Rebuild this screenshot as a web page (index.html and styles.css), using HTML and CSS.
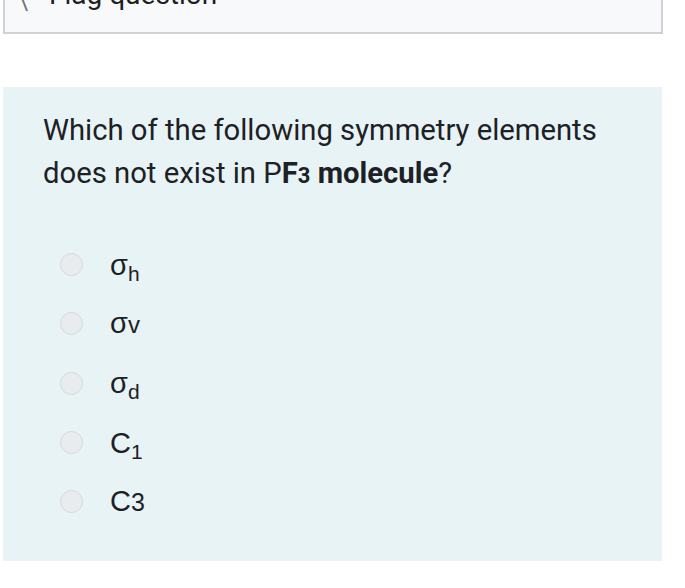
FILE: index.html
```html
<!DOCTYPE html>
<html>
<head>
<meta charset="utf-8">
<link rel="stylesheet" href="styles.css">
</head>
<body>
<div class="page">
  <div class="flagbox">
    <span class="flagicon">\</span>
    <span class="flagtext">Flag question</span>
  </div>
  <div class="qbox">
    <div class="qtext">Which of the following symmetry elements does not exist in P<b>F<span class="small3">3</span> molecule</b>?</div>
    <div class="answers">
      <label class="opt"><span class="radio"></span><span class="lbl">σ<sub>h</sub></span></label>
      <label class="opt"><span class="radio"></span><span class="lbl">σ<span class="inl">v</span></span></label>
      <label class="opt"><span class="radio"></span><span class="lbl">σ<sub>d</sub></span></label>
      <label class="opt"><span class="radio"></span><span class="lbl">C<sub>1</sub></span></label>
      <label class="opt"><span class="radio"></span><span class="lbl">C<span class="small3o">3</span></span></label>
    </div>
  </div>
</div>
</body>
</html>
```
FILE: styles.css
```css
html, body {
  margin: 0;
  padding: 0;
  background: #ffffff;
}
.page {
  width: 685px;
  height: 588px;
  overflow: hidden;
  font-family: Roboto, "Liberation Sans", sans-serif;
  color: #1d2125;
}
.flagbox {
  margin-left: 3px;
  width: 660px;
  height: 44px;
  margin-top: -10px;
  background: #f8f9fa;
  border: 2px solid #cfd1d3;
  display: flex;
  align-items: flex-start;
  box-sizing: border-box;
  padding-left: 14px;
  font-size: 28px;
  line-height: 28px;
}
.flagicon {
  color: #6a737b;
  font-size: 22px;
  line-height: 22px;
  width: 14px;
}
.flagtext {
  margin-left: 16px;
  margin-top: -11px;
  color: #1d2125;
}
.qbox {
  margin-top: 53px;
  margin-left: 3px;
  width: 659px;
  height: 474px;
  background: #e7f3f5;
  box-sizing: border-box;
  padding: 22px 40px 0 40px;
}
.qtext {
  font-size: 29.25px;
  line-height: 43px;
  color: #1d2125;
}
.qtext b {
  font-weight: 700;
}
.small3 {
  font-size: 22px;
}
.answers {
  margin-top: 38px;
  display: flex;
  flex-direction: column;
}
.opt {
  display: flex;
  align-items: center;
  height: 59.3px;
  padding-left: 17px;
}
.radio {
  width: 23px;
  height: 23px;
  border-radius: 50%;
  background: #e9ecef;
  border: 1px solid #d6d9dc;
  box-sizing: border-box;
  flex: none;
}
.lbl {
  margin-left: 27px;
  font-family: "Liberation Sans", Arial, sans-serif;
  font-size: 29px;
  line-height: 32px;
  color: #1d2125;
}
.lbl sub {
  font-size: 21px;
  vertical-align: -6px;
  line-height: 0;
}
.inl {
  font-size: 24px;
}
.small3o {
  font-size: 25px;
}
```
